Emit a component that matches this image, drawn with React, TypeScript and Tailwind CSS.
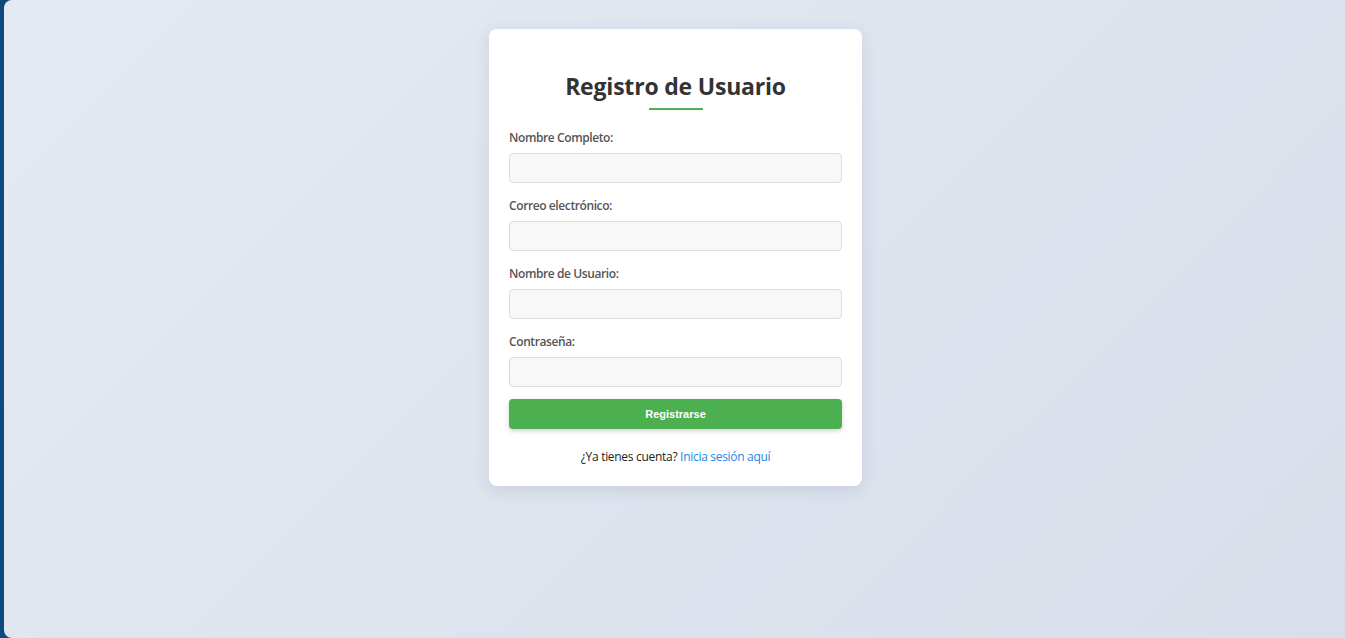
import React from "react";

const fields = [
  { label: "Nombre Completo:", type: "text" },
  { label: "Correo electrónico:", type: "email" },
  { label: "Nombre de Usuario:", type: "text" },
  { label: "Contraseña:", type: "password" },
];

export default function App() {
  return (
    <div className="h-[638px] w-full bg-[#0f4a7d] pl-[4px] overflow-hidden">
      <div
        className="h-full rounded-l-[8px] bg-[linear-gradient(135deg,#e4eaf3_0%,#d8dfea_100%)] flex justify-center pt-[29px] pl-[2px]"
        style={{ fontFamily: '"Open Sans", "Noto Sans", sans-serif' }}
      >
        <div className="w-[373px] h-[457px] bg-white rounded-[8px] shadow-[0_4px_16px_rgba(40,60,100,0.12)] px-[20px] pt-[40px]">
          <h2 className="text-center text-[23px] font-bold text-[#333] leading-[34px] tracking-[-0.2px]">
            Registro de Usuario
          </h2>
          <div className="mx-auto mt-[5px] h-[2px] w-[54px] bg-[#4caf50]" />
          <form className="mt-[19px] flex flex-col" onSubmit={(e) => e.preventDefault()}>
            {fields.map((f) => (
              <div key={f.label} className="mb-[14px] flex flex-col">
                <label className="text-[12px] font-semibold text-[#555] leading-[17px] mb-[7px] tracking-[-0.4px]">
                  {f.label}
                </label>
                <input
                  type={f.type}
                  className="h-[30px] w-full rounded-[4px] border border-[#ddd] bg-[#f8f8f8] px-2 outline-none"
                />
              </div>
            ))}
            <button
              type="submit"
              className="-mt-[2px] h-[30px] w-full rounded-[4px] bg-[#4caf50] text-white text-[11px] font-bold shadow-[0_2px_5px_rgba(0,0,0,0.18)]"
              style={{ fontFamily: '"Liberation Sans", Arial, sans-serif' }}
            >
              Registrarse
            </button>
          </form>
          <p className="mt-[19px] text-center text-[12px] text-[#222] leading-[18px] tracking-[-0.3px]">
            ¿Ya tienes cuenta?{" "}
            <a href="#" className="text-[#2385e6]">
              Inicia sesión aquí
            </a>
          </p>
        </div>
      </div>
    </div>
  );
}
